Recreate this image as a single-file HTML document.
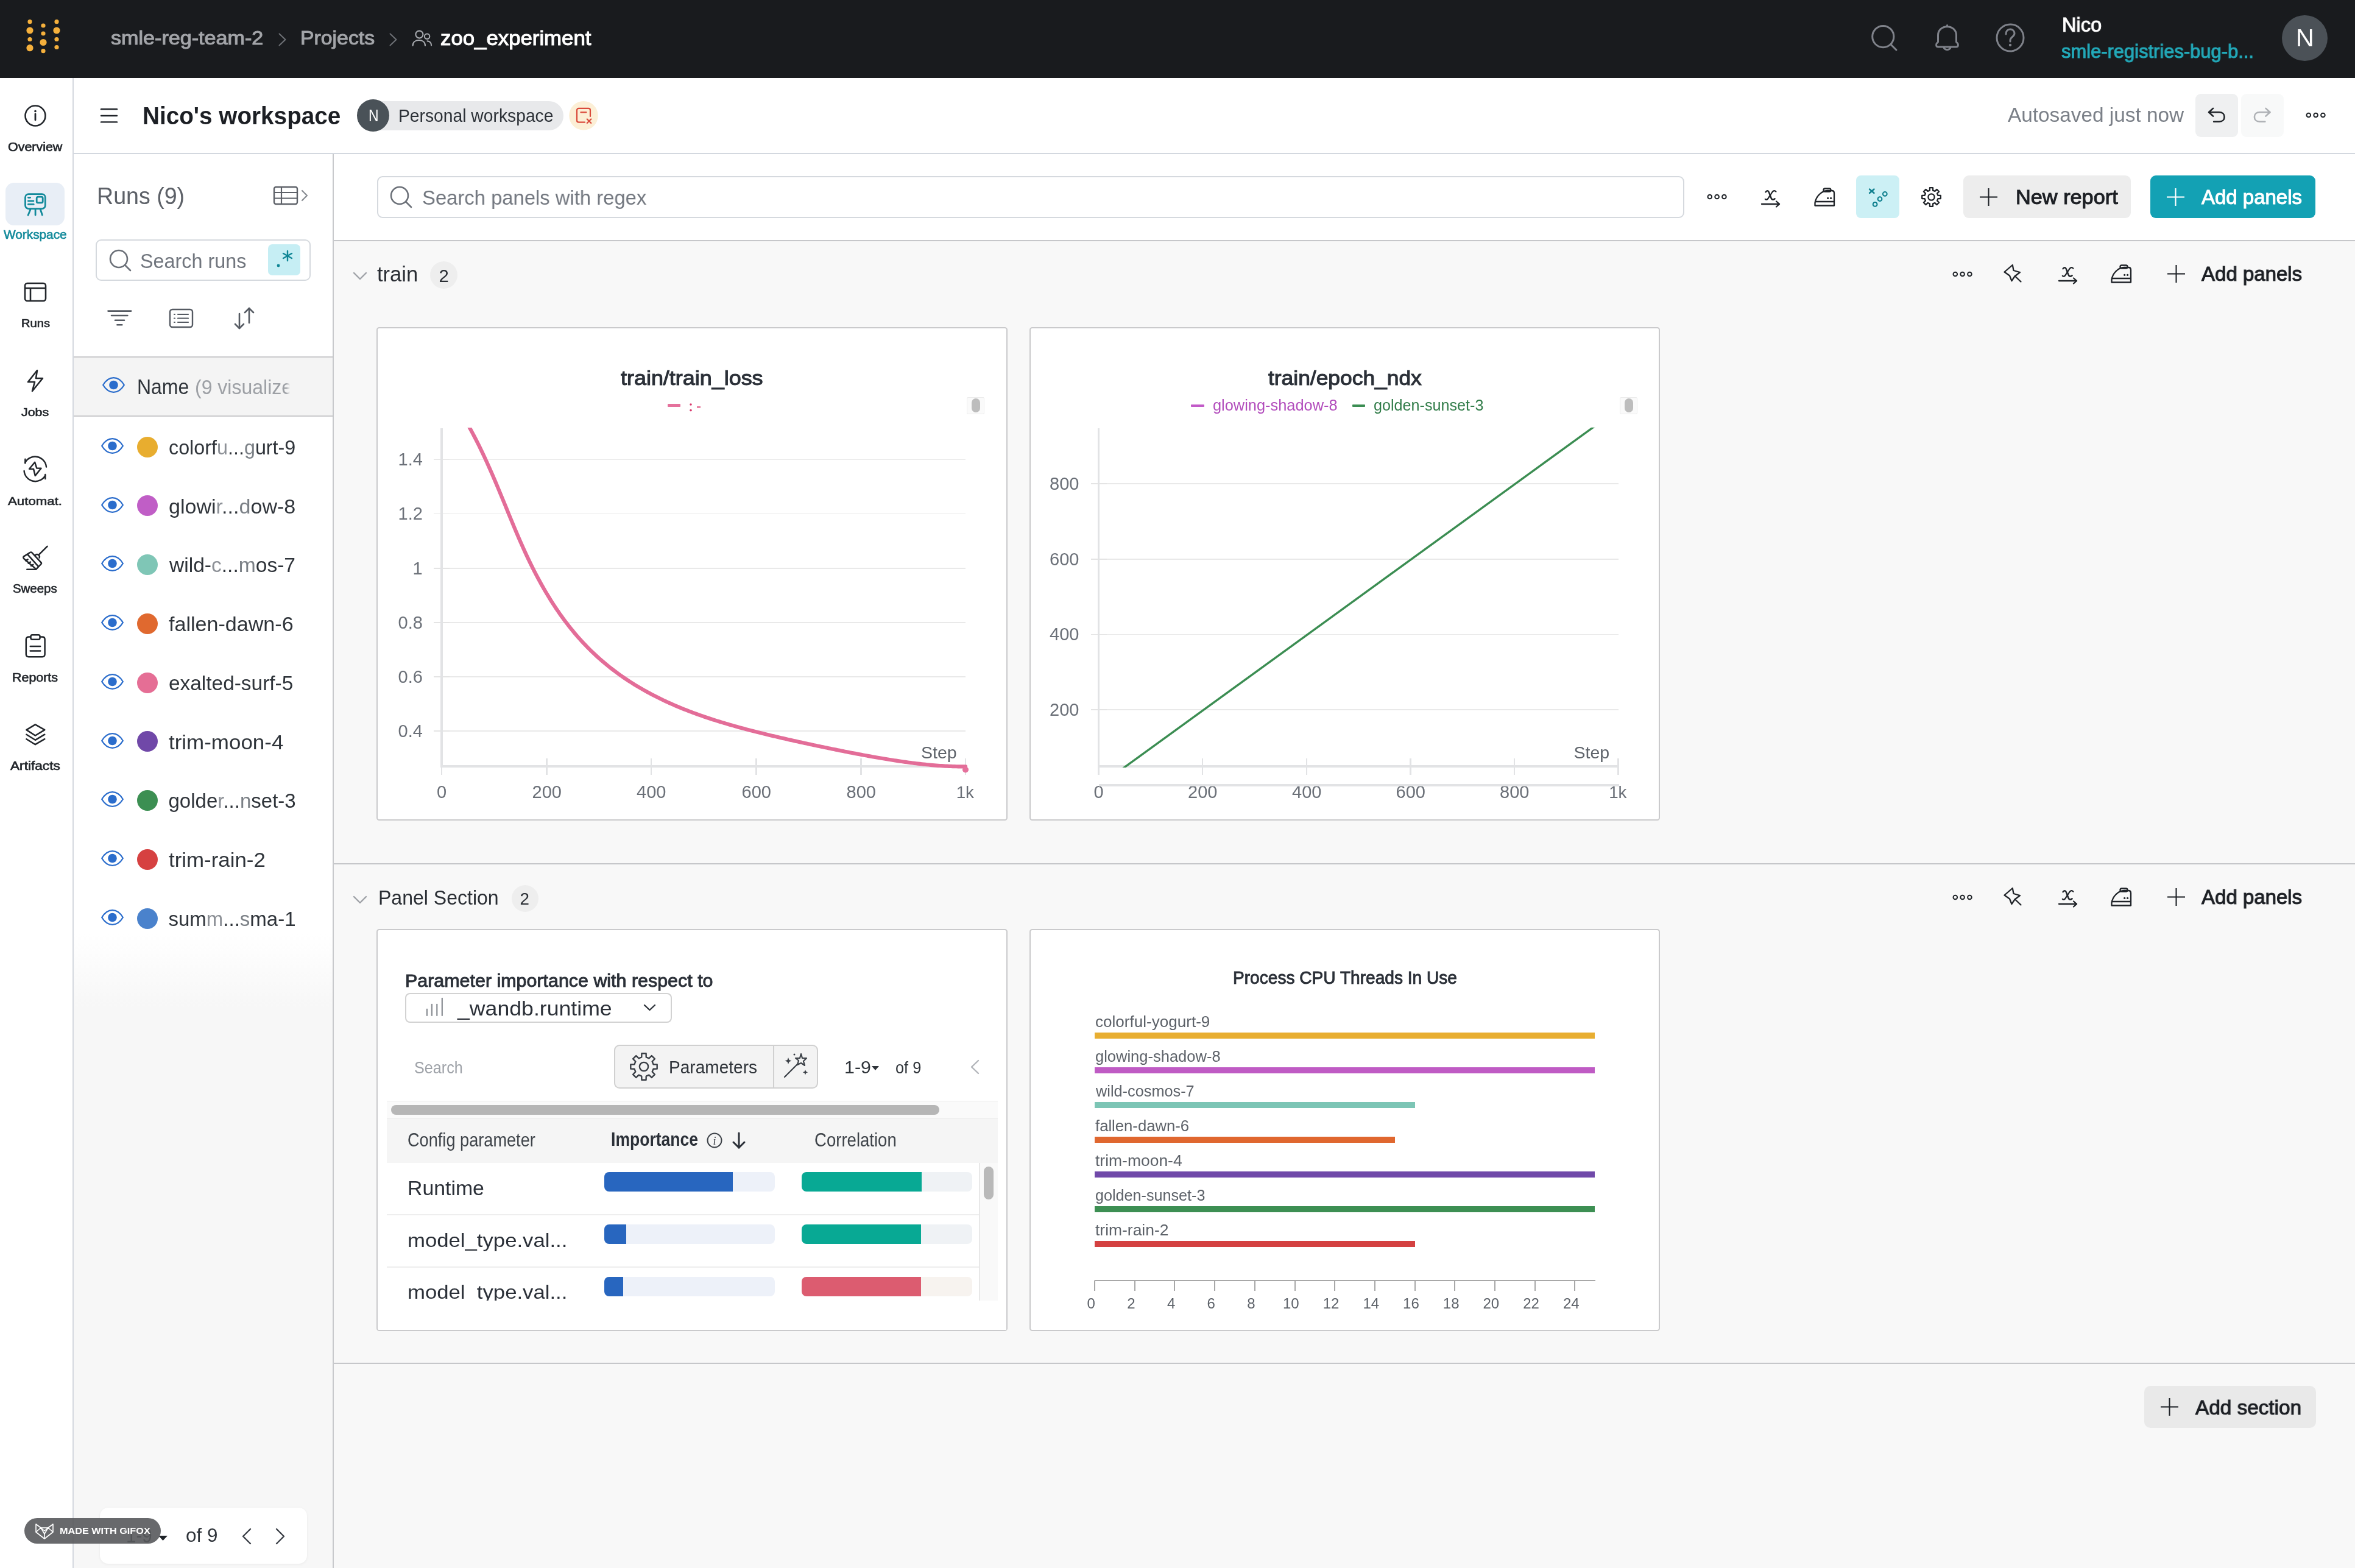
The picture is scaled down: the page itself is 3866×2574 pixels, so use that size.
<!DOCTYPE html><html><head><meta charset="utf-8"><style>
html,body{margin:0;padding:0;width:3866px;height:2574px;overflow:hidden;background:#f8f8f8;font-family:"Liberation Sans",sans-serif;}
#root{position:relative;width:3866px;height:2574px;overflow:hidden;will-change:transform;-webkit-font-smoothing:antialiased;}
</style></head><body><div id="root"><div style="position:absolute;left:0px;top:0px;width:3866px;height:128px;background:#191b1e;border-radius:0px;"></div>
<div style="position:absolute;left:0px;top:128px;width:120px;height:2446px;background:#ffffff;border-radius:0px;"></div>
<div style="position:absolute;left:119px;top:128px;width:2px;height:2446px;background:#d4d8df;border-radius:0px;"></div>
<div style="position:absolute;left:121px;top:128px;width:3745px;height:124px;background:#ffffff;border-radius:0px;"></div>
<div style="position:absolute;left:121px;top:251px;width:3745px;height:2px;background:#d3d8df;border-radius:0px;"></div>
<div style="position:absolute;left:121px;top:253px;width:425px;height:2321px;background:linear-gradient(#ffffff 0px,#ffffff 1280px,#f7f7f7 1400px,#f7f7f7 2321px);border-radius:0px;"></div>
<div style="position:absolute;left:546px;top:253px;width:2px;height:2321px;background:#c8c9cc;border-radius:0px;"></div>
<div style="position:absolute;left:548px;top:253px;width:3318px;height:141px;background:#ffffff;border-radius:0px;"></div>
<div style="position:absolute;left:548px;top:394px;width:3318px;height:2px;background:#c6c7ca;border-radius:0px;"></div>
<div style="position:absolute;left:548px;top:1417px;width:3318px;height:2px;background:#c6c7ca;border-radius:0px;"></div>
<div style="position:absolute;left:548px;top:2237.3px;width:3318px;height:2.0px;background:#c6c7ca;border-radius:0px;"></div>
<svg style="position:absolute;left:0px;top:0px;overflow:visible;" width="140" height="128" viewBox="0 0 140 128"><circle cx="49" cy="35.7" r="3.6" fill="#f5b03c"/><circle cx="49" cy="50" r="5.6" fill="#f5b03c"/><circle cx="49" cy="64.5" r="3.6" fill="#f5b03c"/><circle cx="49" cy="78.7" r="5.6" fill="#f5b03c"/><circle cx="71" cy="42" r="3.6" fill="#f5b03c"/><circle cx="71" cy="55" r="3.6" fill="#f5b03c"/><circle cx="71" cy="69.5" r="5.6" fill="#f5b03c"/><circle cx="71" cy="83.7" r="3.6" fill="#f5b03c"/><circle cx="93" cy="35.7" r="3.6" fill="#f5b03c"/><circle cx="93" cy="50" r="5.6" fill="#f5b03c"/><circle cx="93" cy="64.5" r="3.6" fill="#f5b03c"/><circle cx="93" cy="77.5" r="3.6" fill="#f5b03c"/></svg>
<div style="position:absolute;left:182.00px;top:47.01px;font-size:31.75px;line-height:1;font-weight:normal;color:#a3a5a9;white-space:pre;transform:scaleX(1.0744);transform-origin:0 0;-webkit-text-stroke:1.02px #a3a5a9;">smle-reg-team-2</div>
<svg style="position:absolute;left:455px;top:52px;overflow:visible;" width="20" height="28" viewBox="0 0 20 28"><polyline points="3.5,3.5 13.5,13 3.5,22.5" fill="none" stroke="#6d7075" stroke-width="2" stroke-linecap="round" stroke-linejoin="round"/></svg>
<div style="position:absolute;left:492.50px;top:47.01px;font-size:31.75px;line-height:1;font-weight:normal;color:#a3a5a9;white-space:pre;transform:scaleX(1.0643);transform-origin:0 0;-webkit-text-stroke:1.02px #a3a5a9;">Projects</div>
<svg style="position:absolute;left:637px;top:52px;overflow:visible;" width="20" height="28" viewBox="0 0 20 28"><polyline points="3.5,3.5 13.5,13 3.5,22.5" fill="none" stroke="#6d7075" stroke-width="2" stroke-linecap="round" stroke-linejoin="round"/></svg>
<svg style="position:absolute;left:675px;top:48px;overflow:visible;" width="37" height="34" viewBox="0 0 37 34"><g fill="none" stroke="#a6a9ae" stroke-width="2.1" stroke-linecap="round"><circle cx="13.4" cy="8.6" r="6"/><path d="M2.6 27 C2.6 21 7 18 12.8 18 C18.6 18 23 21 23 27"/><circle cx="26.1" cy="11.7" r="4.2"/><path d="M26.5 19.4 C30.5 19.6 33.1 22.5 33.1 26.4"/></g></svg>
<div style="position:absolute;left:722.50px;top:45.53px;font-size:33.5px;line-height:1;font-weight:normal;color:#ffffff;white-space:pre;transform:scaleX(1.0380);transform-origin:0 0;-webkit-text-stroke:1.07px #ffffff;">zoo_experiment</div>
<svg style="position:absolute;left:3070px;top:40px;overflow:visible;" width="48" height="46" viewBox="0 0 48 46"><circle cx="21.3" cy="20.1" r="17.6" fill="none" stroke="#7f828a" stroke-width="3"/><line x1="34" y1="33" x2="43" y2="42" stroke="#7f828a" stroke-width="3" stroke-linecap="round"/></svg>
<svg style="position:absolute;left:3173px;top:38px;overflow:visible;" width="46" height="50" viewBox="0 0 46 50"><g fill="none" stroke="#7f828a" stroke-width="3" stroke-linejoin="round" stroke-linecap="round"><path d="M23.5 3.5 L23.5 5.5"/><path d="M8.5 31 L8.5 20 C8.5 11.5 15 5.8 23.5 5.8 C32 5.8 38.5 11.5 38.5 20 L38.5 31 L40.5 33 C42.5 35 41.5 39 38.5 39 L8.5 39 C5.5 39 4.5 35 6.5 33 Z"/><path d="M18 39.5 C18.5 45 28.5 45 29 39.5"/></g></svg>
<svg style="position:absolute;left:3275px;top:37px;overflow:visible;" width="50" height="50" viewBox="0 0 50 50"><circle cx="25" cy="25" r="22" fill="none" stroke="#7f828a" stroke-width="3"/><path d="M18 19 C18 14 21 11 25 11 C29 11 32 14 32 18 C32 23 25 24 25 29 L25 31" fill="none" stroke="#7f828a" stroke-width="3" stroke-linecap="round"/><circle cx="25" cy="37" r="2.2" fill="#7f828a"/></svg>
<div style="position:absolute;left:3385.00px;top:23.95px;font-size:33.0px;line-height:1;font-weight:normal;color:#ffffff;white-space:pre;transform:scaleX(0.9848);transform-origin:0 0;-webkit-text-stroke:1.06px #ffffff;">Nico</div>
<div style="position:absolute;left:3384.00px;top:68.65px;font-size:31.0px;line-height:1;font-weight:normal;color:#23a9b9;white-space:pre;transform:scaleX(0.9968);transform-origin:0 0;-webkit-text-stroke:0.99px #23a9b9;">smle-registries-bug-b...</div>
<svg style="position:absolute;left:3746px;top:25px;overflow:visible;" width="76" height="75" viewBox="0 0 76 75"><circle cx="37.5" cy="37.5" r="37.5" fill="#4b5157"/></svg>
<div style="position:absolute;left:3768.91px;top:42.44px;font-size:41.25px;line-height:1;font-weight:normal;color:#ffffff;white-space:pre;">N</div>
<svg style="position:absolute;left:40px;top:172px;overflow:visible;" width="36" height="36" viewBox="0 0 36 36"><circle cx="18" cy="18" r="16.5" fill="none" stroke="#22262b" stroke-width="2.6"/><circle cx="18" cy="10.5" r="1.8" fill="#22262b"/><line x1="18" y1="15" x2="18" y2="25" stroke="#22262b" stroke-width="2.8" stroke-linecap="round"/></svg>
<div style="position:absolute;left:12.50px;top:231.71px;font-size:19.75px;line-height:1;font-weight:normal;color:#22262b;white-space:pre;transform:scaleX(1.0850);transform-origin:0 0;-webkit-text-stroke:0.63px #22262b;">Overview</div>
<div style="position:absolute;left:9.25px;top:300px;width:96.5px;height:69.5px;background:#e8eef6;border-radius:14px;"></div>
<svg style="position:absolute;left:38px;top:315px;overflow:visible;" width="40" height="41" viewBox="0 0 40 41"><g fill="none" stroke="#138a9b" stroke-width="2.8" stroke-linecap="round" stroke-linejoin="round"><rect x="3.5" y="3.6" width="32.8" height="24" rx="5.5"/><line x1="8.4" y1="9.3" x2="11.6" y2="9.3"/><line x1="8.4" y1="14.9" x2="16.9" y2="14.9"/><line x1="8.4" y1="20.4" x2="17.2" y2="20.4"/><rect x="22.2" y="8.2" width="10" height="9.7" rx="2.2"/><line x1="11.9" y1="29" x2="8.1" y2="38.2"/><line x1="20.1" y1="29" x2="20.1" y2="38"/><line x1="28.4" y1="29" x2="31.4" y2="38"/></g></svg>
<div style="position:absolute;left:5.50px;top:375.71px;font-size:19.75px;line-height:1;font-weight:normal;color:#138a9b;white-space:pre;transform:scaleX(1.0532);transform-origin:0 0;-webkit-text-stroke:0.63px #138a9b;">Workspace</div>
<svg style="position:absolute;left:38px;top:462px;overflow:visible;" width="40" height="35" viewBox="0 0 40 35"><rect x="3" y="3" width="34" height="29" rx="4" fill="none" stroke="#22262b" stroke-width="2.6"/><line x1="3" y1="11" x2="37" y2="11" stroke="#22262b" stroke-width="2.6"/><line x1="12" y1="11" x2="12" y2="32" stroke="#22262b" stroke-width="2.6"/></svg>
<div style="position:absolute;left:34.50px;top:522.27px;font-size:18.5px;line-height:1;font-weight:normal;color:#22262b;white-space:pre;transform:scaleX(1.0888);transform-origin:0 0;-webkit-text-stroke:0.59px #22262b;">Runs</div>
<svg style="position:absolute;left:40px;top:605px;overflow:visible;" width="36" height="40" viewBox="0 0 36 40"><path d="M21 3 L6 22 L17 22 L13 37 L30 16 L19 16 Z" fill="none" stroke="#22262b" stroke-width="2.6" stroke-linejoin="round"/></svg>
<div style="position:absolute;left:35.00px;top:667.14px;font-size:19.25px;line-height:1;font-weight:normal;color:#22262b;white-space:pre;transform:scaleX(1.1104);transform-origin:0 0;-webkit-text-stroke:0.62px #22262b;">Jobs</div>
<svg style="position:absolute;left:38px;top:750px;overflow:visible;" width="40" height="41" viewBox="0 0 40 41"><g fill="none" stroke="#22262b" stroke-width="2.5" stroke-linecap="round" stroke-linejoin="round"><path d="M3.2 9.5 A18.5 18.5 0 0 1 38 16.5"/><path d="M1.6 23 A18.5 18.5 0 0 0 36.3 30.5"/><line x1="3.4" y1="3.8" x2="3.4" y2="10.2"/><line x1="36.3" y1="29" x2="36.3" y2="36"/><path d="M19.2 8.8 L10.1 19.7 L17.1 20.1 L19.8 30.9 L29.5 18.8 L22.2 18.4 Z"/></g></svg>
<div style="position:absolute;left:12.50px;top:812.64px;font-size:19.25px;line-height:1;font-weight:normal;color:#22262b;white-space:pre;transform:scaleX(1.1558);transform-origin:0 0;-webkit-text-stroke:0.62px #22262b;">Automat.</div>
<svg style="position:absolute;left:36px;top:895px;overflow:visible;" width="44" height="46" viewBox="0 0 44 46"><g fill="none" stroke="#22262b" stroke-width="2.5" stroke-linecap="round" stroke-linejoin="round"><line x1="41.6" y1="1.8" x2="28" y2="15.4"/><path d="M21.8 16.6 A4 4 0 0 1 28.6 20.6"/><path d="M2.8 18.6 L13.6 11.8 C14.6 11.2 15.6 11.4 16.3 12.2 L31.4 28.3 C32.1 29.1 32.1 30.2 31.4 31 L23.4 39.4 L3.4 22.2 C2.2 21.2 2.0 19.4 2.8 18.6 Z"/><line x1="8.3" y1="39.8" x2="23" y2="39.8"/><line x1="9.2" y1="15.2" x2="26.5" y2="34.3"/><line x1="6.2" y1="25.4" x2="9.6" y2="23.4"/><line x1="10.6" y1="29.6" x2="14" y2="27.6"/><line x1="15" y1="33.8" x2="18.4" y2="31.8"/></g></svg>
<div style="position:absolute;left:21.00px;top:957.21px;font-size:19.75px;line-height:1;font-weight:normal;color:#22262b;white-space:pre;transform:scaleX(1.0341);transform-origin:0 0;-webkit-text-stroke:0.63px #22262b;">Sweeps</div>
<svg style="position:absolute;left:40px;top:1040px;overflow:visible;" width="36" height="41" viewBox="0 0 36 41"><g fill="none" stroke="#22262b" stroke-width="2.5" stroke-linecap="round" stroke-linejoin="round"><path d="M10 5.5 L7 5.5 C4.5 5.5 2.8 7.2 2.8 9.5 L2.8 34 C2.8 36.5 4.5 38.2 7 38.2 L29.5 38.2 C32 38.2 33.6 36.5 33.6 34 L33.6 9.5 C33.6 7.2 32 5.5 29.5 5.5 L26 5.5"/><rect x="10.5" y="2.3" width="15" height="7.5" rx="2.5"/><line x1="9.7" y1="21.1" x2="26.2" y2="21.1"/><line x1="9.7" y1="28.6" x2="26.2" y2="28.6"/></g></svg>
<div style="position:absolute;left:20.00px;top:1102.00px;font-size:20.0px;line-height:1;font-weight:normal;color:#22262b;white-space:pre;transform:scaleX(1.0714);transform-origin:0 0;-webkit-text-stroke:0.64px #22262b;">Reports</div>
<svg style="position:absolute;left:40px;top:1186px;overflow:visible;" width="36" height="40" viewBox="0 0 36 40"><g fill="none" stroke="#22262b" stroke-width="2.5" stroke-linecap="round" stroke-linejoin="round"><path d="M3.4 12.1 L17.9 3.4 L33.3 12.1 L17.9 21.5 Z"/><path d="M3.4 19.7 L17.9 28.8 L33.3 19.7"/><path d="M3.4 27.2 L17.9 36.2 L33.3 27.2"/></g></svg>
<div style="position:absolute;left:16.50px;top:1247.00px;font-size:20.0px;line-height:1;font-weight:normal;color:#22262b;white-space:pre;transform:scaleX(1.1319);transform-origin:0 0;-webkit-text-stroke:0.64px #22262b;">Artifacts</div>
<svg style="position:absolute;left:164px;top:176px;overflow:visible;" width="30" height="28" viewBox="0 0 30 28"><line x1="2" y1="3.2" x2="28" y2="3.2" stroke="#1f2328" stroke-width="2.4" stroke-linecap="round"/><line x1="2" y1="14" x2="28" y2="14" stroke="#1f2328" stroke-width="2.4" stroke-linecap="round"/><line x1="2" y1="24.4" x2="28" y2="24.4" stroke="#1f2328" stroke-width="2.4" stroke-linecap="round"/></svg>
<div style="position:absolute;left:233.60px;top:171.19px;font-size:40.25px;line-height:1;font-weight:bold;color:#1c1f24;white-space:pre;transform:scaleX(0.9613);transform-origin:0 0;">Nico's workspace</div>
<div style="position:absolute;left:600px;top:165.5px;width:324.5px;height:48.5px;background:#e8e9eb;border-radius:25px;"></div>
<svg style="position:absolute;left:586.4px;top:162.8px;overflow:visible;" width="53.0" height="53.0" viewBox="0 0 53.0 53.0"><circle cx="26.5" cy="26.5" r="26.5" fill="#4a5258"/></svg>
<div style="position:absolute;left:604.70px;top:175.47px;font-size:28.5px;line-height:1;font-weight:normal;color:#ffffff;white-space:pre;transform:scaleX(0.8056);transform-origin:0 0;">N</div>
<div style="position:absolute;left:654.40px;top:175.30px;font-size:30.0px;line-height:1;font-weight:normal;color:#2c3137;white-space:pre;transform:scaleX(0.9419);transform-origin:0 0;">Personal workspace</div>
<svg style="position:absolute;left:934px;top:165.5px;overflow:visible;" width="48" height="48.0" viewBox="0 0 48 48.0"><circle cx="24" cy="23.8" r="23.8" fill="#fcefd6"/><g fill="none" stroke="#da4a3b" stroke-width="2.2" stroke-linecap="round" stroke-linejoin="round"><path d="M35 25 L35 15 C35 13 33.5 11.9 32 11.9 L16 11.9 C14.3 11.9 13 13.2 13 15 L13 31.5 C13 33.3 14.3 34.7 16 34.7 L26 34.7"/><line x1="19.4" y1="18.3" x2="28.5" y2="18.3"/><line x1="29.8" y1="29.5" x2="36.3" y2="36"/><line x1="36.3" y1="29.5" x2="29.8" y2="36"/></g></svg>
<div style="position:absolute;left:3296.00px;top:171.95px;font-size:33.0px;line-height:1;font-weight:normal;color:#7b8088;white-space:pre;transform:scaleX(1.0105);transform-origin:0 0;">Autosaved just now</div>
<div style="position:absolute;left:3604.3px;top:154px;width:69.59999999999991px;height:70.6px;background:#eff0f1;border-radius:9px;"></div>
<div style="position:absolute;left:3679.2px;top:154px;width:70.0px;height:70.6px;background:#f8f9f9;border-radius:9px;"></div>
<svg style="position:absolute;left:3620px;top:172px;overflow:visible;" width="40" height="34" viewBox="0 0 40 34"><g fill="none" stroke="#1f2328" stroke-width="2.6" stroke-linecap="round" stroke-linejoin="round"><path d="M6.1 12.3 L23 12.3 C28.5 12.3 31.6 15.5 31.6 19.9 C31.6 24.2 28.5 27.7 23 27.7 L14.2 27.7"/><polyline points="13,5.9 6.1,12.3 13,18.6"/></g></svg>
<svg style="position:absolute;left:3694px;top:172px;overflow:visible;" width="40" height="34" viewBox="0 0 40 34"><g fill="none" stroke="#aeb1b5" stroke-width="2.6" stroke-linecap="round" stroke-linejoin="round"><path d="M32.4 12.3 L15.5 12.3 C10 12.3 6.9 15.5 6.9 19.9 C6.9 24.2 10 27.7 15.5 27.7 L24.3 27.7"/><polyline points="25.5,5.9 32.4,12.3 25.5,18.6"/></g></svg>
<svg style="position:absolute;left:3784px;top:181px;overflow:visible;" width="36" height="16" viewBox="0 0 36 16"><circle cx="5.8" cy="8" r="3.3" fill="none" stroke="#1f2328" stroke-width="2"/><circle cx="17.6" cy="8" r="3.3" fill="none" stroke="#1f2328" stroke-width="2"/><circle cx="29.4" cy="8" r="3.3" fill="none" stroke="#1f2328" stroke-width="2"/></svg>
<div style="position:absolute;left:159.00px;top:301.64px;font-size:39.25px;line-height:1;font-weight:normal;color:#5d6168;white-space:pre;transform:scaleX(0.9572);transform-origin:0 0;">Runs (9)</div>
<svg style="position:absolute;left:447px;top:304px;overflow:visible;" width="63" height="34" viewBox="0 0 63 34"><rect x="3" y="3" width="38" height="28" rx="3" fill="none" stroke="#5d6168" stroke-width="2.4"/><line x1="3" y1="12" x2="41" y2="12" stroke="#5d6168" stroke-width="2.2"/><line x1="3" y1="21.5" x2="41" y2="21.5" stroke="#5d6168" stroke-width="2.2"/><line x1="15" y1="3" x2="15" y2="31" stroke="#5d6168" stroke-width="2.2"/><polyline points="49,9 57,17 49,25" fill="none" stroke="#8a8e94" stroke-width="2.2" stroke-linecap="round" stroke-linejoin="round"/></svg>
<div style="position:absolute;left:156.5px;top:392.5px;width:353.5px;height:68.5px;background:#ffffff;border-radius:9px;border:2px solid #d5d9de;box-sizing:border-box;"></div>
<svg style="position:absolute;left:178px;top:408px;overflow:visible;" width="40" height="40" viewBox="0 0 40 40"><circle cx="17" cy="17" r="14" fill="none" stroke="#6b7078" stroke-width="2.6"/><line x1="27" y1="27" x2="36" y2="36" stroke="#6b7078" stroke-width="2.6" stroke-linecap="round"/></svg>
<div style="position:absolute;left:230.00px;top:411.10px;font-size:34.0px;line-height:1;font-weight:normal;color:#71767e;white-space:pre;transform:scaleX(0.9508);transform-origin:0 0;">Search runs</div>
<div style="position:absolute;left:440px;top:401px;width:53px;height:51px;background:#c6eef4;border-radius:7px;"></div>
<svg style="position:absolute;left:440px;top:401px;overflow:visible;" width="53" height="51" viewBox="0 0 53 51"><circle cx="17" cy="35" r="2.4" fill="#0e8595"/><g stroke="#0e8595" stroke-width="2.4" stroke-linecap="round"><line x1="32" y1="11" x2="32" y2="27"/><line x1="25" y1="15" x2="39" y2="23"/><line x1="39" y1="15" x2="25" y2="23"/></g></svg>
<svg style="position:absolute;left:175px;top:505px;overflow:visible;" width="42" height="35" viewBox="0 0 42 35"><g stroke="#555a62" stroke-width="2.6" stroke-linecap="round"><line x1="2.5" y1="5.6" x2="40.2" y2="5.6"/><line x1="8" y1="13" x2="34.4" y2="13"/><line x1="14" y1="20.7" x2="29" y2="20.7"/><line x1="17.4" y1="28.3" x2="25.3" y2="28.3"/></g></svg>
<svg style="position:absolute;left:276px;top:505px;overflow:visible;" width="44" height="35" viewBox="0 0 44 35"><rect x="3" y="3" width="37" height="29" rx="4" fill="none" stroke="#555a62" stroke-width="2.4"/><g stroke="#555a62" stroke-width="2.2" stroke-linecap="round"><line x1="10" y1="11" x2="11" y2="11"/><line x1="16" y1="11" x2="33" y2="11"/><line x1="10" y1="17.5" x2="11" y2="17.5"/><line x1="16" y1="17.5" x2="33" y2="17.5"/><line x1="10" y1="24" x2="11" y2="24"/><line x1="16" y1="24" x2="33" y2="24"/></g></svg>
<svg style="position:absolute;left:383px;top:503px;overflow:visible;" width="36" height="38" viewBox="0 0 36 38"><g fill="none" stroke="#555a62" stroke-width="2.6" stroke-linecap="round" stroke-linejoin="round"><line x1="10" y1="12" x2="10" y2="36"/><polyline points="3,29 10,36 17,29"/><line x1="26" y1="3" x2="26" y2="27"/><polyline points="19,10 26,3 33,10"/></g></svg>
<div style="position:absolute;left:121px;top:585px;width:425px;height:98px;background:#f4f4f4;border-radius:0px;"></div>
<div style="position:absolute;left:121px;top:585px;width:425px;height:2px;background:#cbcbcd;border-radius:0px;"></div>
<div style="position:absolute;left:121px;top:682px;width:425px;height:2px;background:#cbcbcd;border-radius:0px;"></div>
<svg style="position:absolute;left:168px;top:619.3px;overflow:visible;" width="37" height="26.0" viewBox="0 0 37 26.0"><path d="M1.2 13 C6 5 12 1.2 18.5 1.2 C25 1.2 31 5 35.8 13 C31 21 25 24.8 18.5 24.8 C12 24.8 6 21 1.2 13 Z" fill="none" stroke="#2b6dcc" stroke-width="2.3" stroke-linejoin="round"/><circle cx="18.5" cy="13" r="7.3" fill="#2b6dcc"/></svg>
<div style="position:absolute;left:224.50px;top:618.17px;font-size:34.5px;line-height:1;font-weight:normal;color:#2f343a;white-space:pre;transform:scaleX(0.9259);transform-origin:0 0;">Name</div>
<div style="position:absolute;left:320.00px;top:619.45px;font-size:33.0px;line-height:1;font-weight:normal;color:#9da0a5;white-space:pre;transform:scaleX(0.9697);transform-origin:0 0;">(9 visualize</div>
<div style="position:absolute;left:440px;top:600px;width:106px;height:70px;background:linear-gradient(90deg,rgba(244,244,244,0),rgba(244,244,244,0) 30px,#f4f4f4 36px);border-radius:0px;"></div>
<svg style="position:absolute;left:165.5px;top:718.9px;overflow:visible;" width="37.0" height="26.0" viewBox="0 0 37.0 26.0"><path d="M1.2 13 C6 5 12 1.2 18.5 1.2 C25 1.2 31 5 35.8 13 C31 21 25 24.8 18.5 24.8 C12 24.8 6 21 1.2 13 Z" fill="none" stroke="#2b6dcc" stroke-width="2.3" stroke-linejoin="round"/><circle cx="18.5" cy="13" r="7.3" fill="#2b6dcc"/></svg>
<svg style="position:absolute;left:225px;top:716.5px;overflow:visible;" width="34" height="34.0" viewBox="0 0 34 34.0"><circle cx="17" cy="17" r="17" fill="#e8ad2f"/></svg>
<div style="position:absolute;left:276.50px;top:717.95px;font-size:33.0px;line-height:1;font-weight:normal;color:#2f343a;white-space:pre;transform:scaleX(0.9789);transform-origin:0 0;">colorf<span style="color:#8d9197">u</span>...<span style="color:#7b8086">g</span>urt-9</div>
<svg style="position:absolute;left:165.5px;top:815.65px;overflow:visible;" width="37.0" height="26.0" viewBox="0 0 37.0 26.0"><path d="M1.2 13 C6 5 12 1.2 18.5 1.2 C25 1.2 31 5 35.8 13 C31 21 25 24.8 18.5 24.8 C12 24.8 6 21 1.2 13 Z" fill="none" stroke="#2b6dcc" stroke-width="2.3" stroke-linejoin="round"/><circle cx="18.5" cy="13" r="7.3" fill="#2b6dcc"/></svg>
<svg style="position:absolute;left:225px;top:813.25px;overflow:visible;" width="34" height="34.0" viewBox="0 0 34 34.0"><circle cx="17" cy="17" r="17" fill="#c05ec6"/></svg>
<div style="position:absolute;left:276.50px;top:814.70px;font-size:33.0px;line-height:1;font-weight:normal;color:#2f343a;white-space:pre;transform:scaleX(1.0322);transform-origin:0 0;">glowi<span style="color:#8d9197">r</span>...<span style="color:#7b8086">d</span>ow-8</div>
<svg style="position:absolute;left:165.5px;top:912.4px;overflow:visible;" width="37.0" height="26.0" viewBox="0 0 37.0 26.0"><path d="M1.2 13 C6 5 12 1.2 18.5 1.2 C25 1.2 31 5 35.8 13 C31 21 25 24.8 18.5 24.8 C12 24.8 6 21 1.2 13 Z" fill="none" stroke="#2b6dcc" stroke-width="2.3" stroke-linejoin="round"/><circle cx="18.5" cy="13" r="7.3" fill="#2b6dcc"/></svg>
<svg style="position:absolute;left:225px;top:910.0px;overflow:visible;" width="34" height="34.0" viewBox="0 0 34 34.0"><circle cx="17" cy="17" r="17" fill="#7fc6b6"/></svg>
<div style="position:absolute;left:277.52px;top:911.45px;font-size:33.0px;line-height:1;font-weight:normal;color:#2f343a;white-space:pre;transform:scaleX(1.0171);transform-origin:0 0;">wild-<span style="color:#8d9197">c</span>...<span style="color:#7b8086">m</span>os-7</div>
<svg style="position:absolute;left:165.5px;top:1009.15px;overflow:visible;" width="37.0" height="26.000000000000114" viewBox="0 0 37.0 26.000000000000114"><path d="M1.2 13 C6 5 12 1.2 18.5 1.2 C25 1.2 31 5 35.8 13 C31 21 25 24.8 18.5 24.8 C12 24.8 6 21 1.2 13 Z" fill="none" stroke="#2b6dcc" stroke-width="2.3" stroke-linejoin="round"/><circle cx="18.5" cy="13" r="7.3" fill="#2b6dcc"/></svg>
<svg style="position:absolute;left:225px;top:1006.75px;overflow:visible;" width="34" height="34.0" viewBox="0 0 34 34.0"><circle cx="17" cy="17" r="17" fill="#e0692f"/></svg>
<div style="position:absolute;left:276.50px;top:1008.20px;font-size:33.0px;line-height:1;font-weight:normal;color:#2f343a;white-space:pre;transform:scaleX(1.0328);transform-origin:0 0;">fallen-dawn-6</div>
<svg style="position:absolute;left:165.5px;top:1105.9px;overflow:visible;" width="37.0" height="26.0" viewBox="0 0 37.0 26.0"><path d="M1.2 13 C6 5 12 1.2 18.5 1.2 C25 1.2 31 5 35.8 13 C31 21 25 24.8 18.5 24.8 C12 24.8 6 21 1.2 13 Z" fill="none" stroke="#2b6dcc" stroke-width="2.3" stroke-linejoin="round"/><circle cx="18.5" cy="13" r="7.3" fill="#2b6dcc"/></svg>
<svg style="position:absolute;left:225px;top:1103.5px;overflow:visible;" width="34" height="34.0" viewBox="0 0 34 34.0"><circle cx="17" cy="17" r="17" fill="#e56e95"/></svg>
<div style="position:absolute;left:276.50px;top:1104.95px;font-size:33.0px;line-height:1;font-weight:normal;color:#2f343a;white-space:pre;transform:scaleX(1.0124);transform-origin:0 0;">exalted-surf-5</div>
<svg style="position:absolute;left:165.5px;top:1202.65px;overflow:visible;" width="37.0" height="26.0" viewBox="0 0 37.0 26.0"><path d="M1.2 13 C6 5 12 1.2 18.5 1.2 C25 1.2 31 5 35.8 13 C31 21 25 24.8 18.5 24.8 C12 24.8 6 21 1.2 13 Z" fill="none" stroke="#2b6dcc" stroke-width="2.3" stroke-linejoin="round"/><circle cx="18.5" cy="13" r="7.3" fill="#2b6dcc"/></svg>
<svg style="position:absolute;left:225px;top:1200.25px;overflow:visible;" width="34" height="34.0" viewBox="0 0 34 34.0"><circle cx="17" cy="17" r="17" fill="#7048a8"/></svg>
<div style="position:absolute;left:276.50px;top:1201.70px;font-size:33.0px;line-height:1;font-weight:normal;color:#2f343a;white-space:pre;transform:scaleX(1.0590);transform-origin:0 0;">trim-moon-4</div>
<svg style="position:absolute;left:165.5px;top:1299.4px;overflow:visible;" width="37.0" height="26.0" viewBox="0 0 37.0 26.0"><path d="M1.2 13 C6 5 12 1.2 18.5 1.2 C25 1.2 31 5 35.8 13 C31 21 25 24.8 18.5 24.8 C12 24.8 6 21 1.2 13 Z" fill="none" stroke="#2b6dcc" stroke-width="2.3" stroke-linejoin="round"/><circle cx="18.5" cy="13" r="7.3" fill="#2b6dcc"/></svg>
<svg style="position:absolute;left:225px;top:1297.0px;overflow:visible;" width="34" height="34.0" viewBox="0 0 34 34.0"><circle cx="17" cy="17" r="17" fill="#3c8f52"/></svg>
<div style="position:absolute;left:276.50px;top:1298.45px;font-size:33.0px;line-height:1;font-weight:normal;color:#2f343a;white-space:pre;">golde<span style="color:#8d9197">r</span>...<span style="color:#7b8086">n</span>set-3</div>
<svg style="position:absolute;left:165.5px;top:1396.15px;overflow:visible;" width="37.0" height="26.0" viewBox="0 0 37.0 26.0"><path d="M1.2 13 C6 5 12 1.2 18.5 1.2 C25 1.2 31 5 35.8 13 C31 21 25 24.8 18.5 24.8 C12 24.8 6 21 1.2 13 Z" fill="none" stroke="#2b6dcc" stroke-width="2.3" stroke-linejoin="round"/><circle cx="18.5" cy="13" r="7.3" fill="#2b6dcc"/></svg>
<svg style="position:absolute;left:225px;top:1393.75px;overflow:visible;" width="34" height="34.0" viewBox="0 0 34 34.0"><circle cx="17" cy="17" r="17" fill="#d64141"/></svg>
<div style="position:absolute;left:276.50px;top:1395.20px;font-size:33.0px;line-height:1;font-weight:normal;color:#2f343a;white-space:pre;transform:scaleX(1.0567);transform-origin:0 0;">trim-rain-2</div>
<svg style="position:absolute;left:165.5px;top:1492.9px;overflow:visible;" width="37.0" height="26.0" viewBox="0 0 37.0 26.0"><path d="M1.2 13 C6 5 12 1.2 18.5 1.2 C25 1.2 31 5 35.8 13 C31 21 25 24.8 18.5 24.8 C12 24.8 6 21 1.2 13 Z" fill="none" stroke="#2b6dcc" stroke-width="2.3" stroke-linejoin="round"/><circle cx="18.5" cy="13" r="7.3" fill="#2b6dcc"/></svg>
<svg style="position:absolute;left:225px;top:1490.5px;overflow:visible;" width="34" height="34.0" viewBox="0 0 34 34.0"><circle cx="17" cy="17" r="17" fill="#4a82cc"/></svg>
<div style="position:absolute;left:276.50px;top:1491.95px;font-size:33.0px;line-height:1;font-weight:normal;color:#2f343a;white-space:pre;">sum<span style="color:#8d9197">m</span>...<span style="color:#7b8086">s</span>ma-1</div>
<div style="position:absolute;left:618.5px;top:288.5px;width:2146.5px;height:69.5px;background:#ffffff;border-radius:9px;border:2px solid #d5d9de;box-sizing:border-box;"></div>
<svg style="position:absolute;left:639px;top:304px;overflow:visible;" width="40" height="40" viewBox="0 0 40 40"><circle cx="17" cy="17" r="14" fill="none" stroke="#6b7078" stroke-width="2.6"/><line x1="27" y1="27" x2="36" y2="36" stroke="#6b7078" stroke-width="2.6" stroke-linecap="round"/></svg>
<div style="position:absolute;left:692.50px;top:307.10px;font-size:34.0px;line-height:1;font-weight:normal;color:#71767e;white-space:pre;transform:scaleX(0.9647);transform-origin:0 0;">Search panels with regex</div>
<svg style="position:absolute;left:2801px;top:315px;overflow:visible;" width="36" height="16" viewBox="0 0 36 16"><circle cx="5.8" cy="8" r="3.3" fill="none" stroke="#1f2328" stroke-width="2"/><circle cx="17.6" cy="8" r="3.3" fill="none" stroke="#1f2328" stroke-width="2"/><circle cx="29.4" cy="8" r="3.3" fill="none" stroke="#1f2328" stroke-width="2"/></svg>
<svg style="position:absolute;left:2891px;top:311px;overflow:visible;" width="32" height="30" viewBox="0 0 32 30"><g fill="none" stroke="#1f2328" stroke-linecap="round" stroke-linejoin="round"><path d="M7.6 4.2 C9.2 1.6 11.6 1.4 12.8 4.4 L16.6 14.2 C17.6 16.8 19.8 17.6 22.6 15.2" stroke-width="2.5"/><path d="M24.4 3.6 C22.4 1.2 20.2 1.8 18.6 4 L11.6 14.6 C10.2 16.8 8.2 17.4 6.8 15.8" stroke-width="2.2"/><line x1="1" y1="24" x2="30" y2="24" stroke-width="2.3"/><polyline points="25,19.5 30,24 25,28.5" stroke-width="2.3"/></g></svg>
<svg style="position:absolute;left:2978px;top:309px;overflow:visible;" width="35" height="30" viewBox="0 0 35 30"><g fill="none" stroke="#1f2328" stroke-width="2.3" stroke-linejoin="round" stroke-linecap="round"><path d="M1.5 28.5 L33 28.5 L33 8 C33 5 31 4 29 4 L22 4 C12 4 3 14 1.5 24 Z"/><line x1="2" y1="22" x2="33" y2="22"/><rect x="15.5" y="0.5" width="12" height="5" rx="2.5"/></g><circle cx="22.7" cy="16.3" r="1.6" fill="#1f2328"/><circle cx="27.6" cy="16.3" r="1.6" fill="#1f2328"/></svg>
<div style="position:absolute;left:3047px;top:288px;width:71px;height:70px;background:#ccf0f5;border-radius:8px;"></div>
<svg style="position:absolute;left:3047px;top:288px;overflow:visible;" width="71" height="70" viewBox="0 0 71 70"><g stroke="#0f7f8e" stroke-width="2.4" stroke-linecap="round"><line x1="22" y1="22.5" x2="29.5" y2="29"/><line x1="29.5" y1="22.5" x2="22" y2="29"/></g><g fill="none" stroke="#0f7f8e" stroke-width="2"><circle cx="31.1" cy="47.4" r="3.4"/><circle cx="39" cy="38.7" r="3.4"/><circle cx="47.3" cy="30.3" r="3.4"/></g></svg>
<svg style="position:absolute;left:3151.3px;top:304.3px;overflow:visible;" width="39.0" height="39.0" viewBox="0 0 39.0 39.0"><g transform="translate(-3151.3,-304.3)"><path d="M3168.18,312.90 L3168.26,308.51 L3173.34,308.51 L3173.42,312.90 L3176.66,314.24 L3179.81,311.19 L3183.41,314.79 L3180.36,317.94 L3181.70,321.18 L3186.09,321.26 L3186.09,326.34 L3181.70,326.42 L3180.36,329.66 L3183.41,332.81 L3179.81,336.41 L3176.66,333.36 L3173.42,334.70 L3173.34,339.09 L3168.26,339.09 L3168.18,334.70 L3164.94,333.36 L3161.79,336.41 L3158.19,332.81 L3161.24,329.66 L3159.90,326.42 L3155.51,326.34 L3155.51,321.26 L3159.90,321.18 L3161.24,317.94 L3158.19,314.79 L3161.79,311.19 L3164.94,314.24 Z" fill="none" stroke="#1f2328" stroke-width="2.3" stroke-linejoin="round"/><circle cx="3170.8" cy="323.8" r="5.12" fill="none" stroke="#1f2328" stroke-width="2.3"/></g></svg>
<div style="position:absolute;left:3223px;top:288px;width:275px;height:70px;background:#ededed;border-radius:9px;"></div>
<svg style="position:absolute;left:3250px;top:308.8px;overflow:visible;" width="29" height="29.0" viewBox="0 0 29 29.0"><g stroke="#1f2328" stroke-width="2.1" stroke-linecap="butt"><line x1="14.5" y1="0" x2="14.5" y2="29"/><line x1="0" y1="14.5" x2="29" y2="14.5"/></g></svg>
<div style="position:absolute;left:3308.90px;top:306.54px;font-size:33.25px;line-height:1;font-weight:normal;color:#1c1f24;white-space:pre;transform:scaleX(1.0313);transform-origin:0 0;-webkit-text-stroke:1.06px #1c1f24;">New report</div>
<div style="position:absolute;left:3530px;top:288px;width:271px;height:70px;background:#13a1b4;border-radius:9px;"></div>
<svg style="position:absolute;left:3557px;top:308.8px;overflow:visible;" width="29" height="29.0" viewBox="0 0 29 29.0"><g stroke="#ffffff" stroke-width="2.1" stroke-linecap="butt"><line x1="14.5" y1="0" x2="14.5" y2="29"/><line x1="0" y1="14.5" x2="29" y2="14.5"/></g></svg>
<div style="position:absolute;left:3613.80px;top:306.54px;font-size:33.25px;line-height:1;font-weight:normal;color:#ffffff;white-space:pre;transform:scaleX(0.9919);transform-origin:0 0;-webkit-text-stroke:1.06px #ffffff;">Add panels</div>
<svg style="position:absolute;left:579px;top:445px;overflow:visible;" width="24" height="16" viewBox="0 0 24 16"><polyline points="2,3 12,13 22,3" fill="none" stroke="#9da0a5" stroke-width="2.4" stroke-linecap="round" stroke-linejoin="round"/></svg>
<div style="position:absolute;left:619.20px;top:433.22px;font-size:35.5px;line-height:1;font-weight:normal;color:#2a2e34;white-space:pre;transform:scaleX(0.9721);transform-origin:0 0;">train</div>
<svg style="position:absolute;left:706.4px;top:429px;overflow:visible;" width="45.0" height="45" viewBox="0 0 45.0 45"><circle cx="22.5" cy="22.5" r="22.5" fill="#eeeeee"/></svg>
<div style="position:absolute;left:720.43px;top:438.54px;font-size:29.25px;line-height:1;font-weight:normal;color:#2a2e34;white-space:pre;">2</div>
<svg style="position:absolute;left:3204px;top:441.6px;overflow:visible;" width="36" height="16.0" viewBox="0 0 36 16.0"><circle cx="5.8" cy="8" r="3.3" fill="none" stroke="#1f2328" stroke-width="2"/><circle cx="17.6" cy="8" r="3.3" fill="none" stroke="#1f2328" stroke-width="2"/><circle cx="29.4" cy="8" r="3.3" fill="none" stroke="#1f2328" stroke-width="2"/></svg>
<svg style="position:absolute;left:3288.5px;top:434.1px;overflow:visible;" width="30.0" height="30.0" viewBox="0 0 30.0 30.0"><g fill="none" stroke="#1f2328" stroke-width="2.3" stroke-linejoin="round" stroke-linecap="round"><path d="M1.5 12.5 L14.8 1 L16.5 10 L27 13 L18.5 19.5 L13.4 27 L10 18.5 Z"/><line x1="19" y1="19.5" x2="28.5" y2="28.5"/></g></svg>
<svg style="position:absolute;left:3379px;top:437.1px;overflow:visible;" width="32" height="30.0" viewBox="0 0 32 30.0"><g fill="none" stroke="#1f2328" stroke-linecap="round" stroke-linejoin="round"><path d="M7.6 4.2 C9.2 1.6 11.6 1.4 12.8 4.4 L16.6 14.2 C17.6 16.8 19.8 17.6 22.6 15.2" stroke-width="2.5"/><path d="M24.4 3.6 C22.4 1.2 20.2 1.8 18.6 4 L11.6 14.6 C10.2 16.8 8.2 17.4 6.8 15.8" stroke-width="2.2"/><line x1="1" y1="24" x2="30" y2="24" stroke-width="2.3"/><polyline points="25,19.5 30,24 25,28.5" stroke-width="2.3"/></g></svg>
<svg style="position:absolute;left:3465px;top:435.1px;overflow:visible;" width="35" height="30.0" viewBox="0 0 35 30.0"><g fill="none" stroke="#1f2328" stroke-width="2.3" stroke-linejoin="round" stroke-linecap="round"><path d="M1.5 28.5 L33 28.5 L33 8 C33 5 31 4 29 4 L22 4 C12 4 3 14 1.5 24 Z"/><line x1="2" y1="22" x2="33" y2="22"/><rect x="15.5" y="0.5" width="12" height="5" rx="2.5"/></g><circle cx="22.7" cy="16.3" r="1.6" fill="#1f2328"/><circle cx="27.6" cy="16.3" r="1.6" fill="#1f2328"/></svg>
<svg style="position:absolute;left:3557.5px;top:435.1px;overflow:visible;" width="29.0" height="29.0" viewBox="0 0 29.0 29.0"><g stroke="#1f2328" stroke-width="2.1" stroke-linecap="butt"><line x1="14.5" y1="0" x2="14.5" y2="29"/><line x1="0" y1="14.5" x2="29" y2="14.5"/></g></svg>
<div style="position:absolute;left:3613.80px;top:432.94px;font-size:33.25px;line-height:1;font-weight:normal;color:#1c1f24;white-space:pre;transform:scaleX(0.9919);transform-origin:0 0;-webkit-text-stroke:1.06px #1c1f24;">Add panels</div>
<svg style="position:absolute;left:578.5px;top:1468.5px;overflow:visible;" width="24.0" height="16.0" viewBox="0 0 24.0 16.0"><polyline points="2,3 12,13 22,3" fill="none" stroke="#9da0a5" stroke-width="2.4" stroke-linecap="round" stroke-linejoin="round"/></svg>
<div style="position:absolute;left:620.60px;top:1457.12px;font-size:33.5px;line-height:1;font-weight:normal;color:#2a2e34;white-space:pre;transform:scaleX(0.9560);transform-origin:0 0;">Panel Section</div>
<svg style="position:absolute;left:839.8px;top:1452.8px;overflow:visible;" width="44.0" height="44.0" viewBox="0 0 44.0 44.0"><circle cx="22" cy="22" r="22" fill="#eeeeee"/></svg>
<div style="position:absolute;left:853.47px;top:1462.01px;font-size:27.75px;line-height:1;font-weight:normal;color:#2a2e34;white-space:pre;">2</div>
<svg style="position:absolute;left:3204px;top:1464.5px;overflow:visible;" width="36" height="16.0" viewBox="0 0 36 16.0"><circle cx="5.8" cy="8" r="3.3" fill="none" stroke="#1f2328" stroke-width="2"/><circle cx="17.6" cy="8" r="3.3" fill="none" stroke="#1f2328" stroke-width="2"/><circle cx="29.4" cy="8" r="3.3" fill="none" stroke="#1f2328" stroke-width="2"/></svg>
<svg style="position:absolute;left:3288.5px;top:1457.0px;overflow:visible;" width="30.0" height="30.0" viewBox="0 0 30.0 30.0"><g fill="none" stroke="#1f2328" stroke-width="2.3" stroke-linejoin="round" stroke-linecap="round"><path d="M1.5 12.5 L14.8 1 L16.5 10 L27 13 L18.5 19.5 L13.4 27 L10 18.5 Z"/><line x1="19" y1="19.5" x2="28.5" y2="28.5"/></g></svg>
<svg style="position:absolute;left:3379px;top:1460.0px;overflow:visible;" width="32" height="30.0" viewBox="0 0 32 30.0"><g fill="none" stroke="#1f2328" stroke-linecap="round" stroke-linejoin="round"><path d="M7.6 4.2 C9.2 1.6 11.6 1.4 12.8 4.4 L16.6 14.2 C17.6 16.8 19.8 17.6 22.6 15.2" stroke-width="2.5"/><path d="M24.4 3.6 C22.4 1.2 20.2 1.8 18.6 4 L11.6 14.6 C10.2 16.8 8.2 17.4 6.8 15.8" stroke-width="2.2"/><line x1="1" y1="24" x2="30" y2="24" stroke-width="2.3"/><polyline points="25,19.5 30,24 25,28.5" stroke-width="2.3"/></g></svg>
<svg style="position:absolute;left:3465px;top:1458.0px;overflow:visible;" width="35" height="30.0" viewBox="0 0 35 30.0"><g fill="none" stroke="#1f2328" stroke-width="2.3" stroke-linejoin="round" stroke-linecap="round"><path d="M1.5 28.5 L33 28.5 L33 8 C33 5 31 4 29 4 L22 4 C12 4 3 14 1.5 24 Z"/><line x1="2" y1="22" x2="33" y2="22"/><rect x="15.5" y="0.5" width="12" height="5" rx="2.5"/></g><circle cx="22.7" cy="16.3" r="1.6" fill="#1f2328"/><circle cx="27.6" cy="16.3" r="1.6" fill="#1f2328"/></svg>
<svg style="position:absolute;left:3557.5px;top:1458.0px;overflow:visible;" width="29.0" height="29.0" viewBox="0 0 29.0 29.0"><g stroke="#1f2328" stroke-width="2.1" stroke-linecap="butt"><line x1="14.5" y1="0" x2="14.5" y2="29"/><line x1="0" y1="14.5" x2="29" y2="14.5"/></g></svg>
<div style="position:absolute;left:3613.80px;top:1455.74px;font-size:33.25px;line-height:1;font-weight:normal;color:#1c1f24;white-space:pre;transform:scaleX(0.9919);transform-origin:0 0;-webkit-text-stroke:1.06px #1c1f24;">Add panels</div>
<div style="position:absolute;left:3520.1px;top:2274.9px;width:281.8000000000002px;height:69.59999999999991px;background:#e9e9e9;border-radius:10px;"></div>
<svg style="position:absolute;left:3547.3px;top:2295.1px;overflow:visible;" width="29.0" height="29.0" viewBox="0 0 29.0 29.0"><g stroke="#1f2328" stroke-width="2.1" stroke-linecap="butt"><line x1="14.5" y1="0" x2="14.5" y2="29"/><line x1="0" y1="14.5" x2="29" y2="14.5"/></g></svg>
<div style="position:absolute;left:3603.50px;top:2293.30px;font-size:34.0px;line-height:1;font-weight:normal;color:#1c1f24;white-space:pre;transform:scaleX(0.9798);transform-origin:0 0;-webkit-text-stroke:1.09px #1c1f24;">Add section</div>
<div style="position:absolute;left:618.1px;top:537.3px;width:1035.9px;height:809.7px;background:#ffffff;border-radius:4.5px;border:2px solid #cacacc;box-sizing:border-box;"></div>
<div style="position:absolute;left:1689.8px;top:537.3px;width:1035.6000000000001px;height:809.7px;background:#ffffff;border-radius:4.5px;border:2px solid #cacacc;box-sizing:border-box;"></div>
<div style="position:absolute;left:618.1px;top:1525.3px;width:1035.9px;height:659.5000000000002px;background:#ffffff;border-radius:4.5px;border:2px solid #cacacc;box-sizing:border-box;"></div>
<div style="position:absolute;left:1689.8px;top:1525.3px;width:1035.6000000000001px;height:659.5000000000002px;background:#ffffff;border-radius:4.5px;border:2px solid #cacacc;box-sizing:border-box;"></div>
<div style="position:absolute;left:1019.00px;top:604.45px;font-size:33.0px;line-height:1;font-weight:normal;color:#2b3038;white-space:pre;transform:scaleX(1.0884);transform-origin:0 0;-webkit-text-stroke:1.06px #2b3038;">train/train_loss</div>
<div style="position:absolute;left:1095.6px;top:663.4px;width:21.300000000000182px;height:4.399999999999977px;background:#e5719c;border-radius:1px;"></div>
<svg style="position:absolute;left:1128px;top:655px;overflow:visible;" width="27" height="25" viewBox="0 0 27 25"><circle cx="6" cy="9" r="1.8" fill="#d9386c"/><circle cx="6" cy="18.6" r="1.8" fill="#d9386c"/><line x1="16" y1="13.2" x2="22" y2="13.2" stroke="#d9386c" stroke-width="1.8"/></svg>
<div style="position:absolute;left:1587px;top:652px;width:29px;height:28px;background:#fafafa;border-radius:2px;border:1px solid #ececec;box-sizing:border-box;"></div>
<div style="position:absolute;left:1595px;top:654px;width:14px;height:23px;background:#bdbdbd;border-radius:7px;"></div>
<div style="position:absolute;left:738px;top:753.75px;width:847px;height:1.5px;background:#e9e9e9;border-radius:0px;"></div>
<div style="position:absolute;left:712px;top:753.75px;width:26px;height:1.5px;background:#e4e4e4;border-radius:0px;"></div>
<div style="position:absolute;left:653.50px;top:740.05px;font-size:29.0px;line-height:1;font-weight:normal;color:#6b7078;white-space:pre;">1.4</div>
<div style="position:absolute;left:738px;top:842.75px;width:847px;height:1.5px;background:#e9e9e9;border-radius:0px;"></div>
<div style="position:absolute;left:712px;top:842.75px;width:26px;height:1.5px;background:#e4e4e4;border-radius:0px;"></div>
<div style="position:absolute;left:653.50px;top:829.05px;font-size:29.0px;line-height:1;font-weight:normal;color:#6b7078;white-space:pre;">1.2</div>
<div style="position:absolute;left:738px;top:932.25px;width:847px;height:1.5px;background:#e9e9e9;border-radius:0px;"></div>
<div style="position:absolute;left:712px;top:932.25px;width:26px;height:1.5px;background:#e4e4e4;border-radius:0px;"></div>
<div style="position:absolute;left:677.50px;top:918.55px;font-size:29.0px;line-height:1;font-weight:normal;color:#6b7078;white-space:pre;">1</div>
<div style="position:absolute;left:738px;top:1021.25px;width:847px;height:1.5px;background:#e9e9e9;border-radius:0px;"></div>
<div style="position:absolute;left:712px;top:1021.25px;width:26px;height:1.5px;background:#e4e4e4;border-radius:0px;"></div>
<div style="position:absolute;left:653.50px;top:1007.55px;font-size:29.0px;line-height:1;font-weight:normal;color:#6b7078;white-space:pre;">0.8</div>
<div style="position:absolute;left:738px;top:1110.25px;width:847px;height:1.5px;background:#e9e9e9;border-radius:0px;"></div>
<div style="position:absolute;left:712px;top:1110.25px;width:26px;height:1.5px;background:#e4e4e4;border-radius:0px;"></div>
<div style="position:absolute;left:653.50px;top:1096.55px;font-size:29.0px;line-height:1;font-weight:normal;color:#6b7078;white-space:pre;">0.6</div>
<div style="position:absolute;left:738px;top:1199.25px;width:847px;height:1.5px;background:#e9e9e9;border-radius:0px;"></div>
<div style="position:absolute;left:712px;top:1199.25px;width:26px;height:1.5px;background:#e4e4e4;border-radius:0px;"></div>
<div style="position:absolute;left:653.50px;top:1185.55px;font-size:29.0px;line-height:1;font-weight:normal;color:#6b7078;white-space:pre;">0.4</div>
<div style="position:absolute;left:723.2px;top:702.5px;width:3.599999999999909px;height:557.0px;background:#e2e3e5;border-radius:0px;"></div>
<div style="position:absolute;left:725px;top:1256.4px;width:861px;height:4.0px;background:#e2e3e5;border-radius:0px;"></div>
<div style="position:absolute;left:723.6px;top:1244.8px;width:2.7999999999999545px;height:27.100000000000136px;background:#e2e3e5;border-radius:0px;"></div>
<div style="position:absolute;left:717.00px;top:1286.35px;font-size:29.0px;line-height:1;font-weight:normal;color:#6b7078;white-space:pre;">0</div>
<div style="position:absolute;left:896.1px;top:1244.8px;width:2.7999999999999545px;height:27.100000000000136px;background:#e2e3e5;border-radius:0px;"></div>
<div style="position:absolute;left:873.50px;top:1286.35px;font-size:29.0px;line-height:1;font-weight:normal;color:#6b7078;white-space:pre;">200</div>
<div style="position:absolute;left:1067.6px;top:1244.8px;width:2.800000000000182px;height:27.100000000000136px;background:#e2e3e5;border-radius:0px;"></div>
<div style="position:absolute;left:1045.00px;top:1286.35px;font-size:29.0px;line-height:1;font-weight:normal;color:#6b7078;white-space:pre;">400</div>
<div style="position:absolute;left:1240.1px;top:1244.8px;width:2.800000000000182px;height:27.100000000000136px;background:#e2e3e5;border-radius:0px;"></div>
<div style="position:absolute;left:1217.50px;top:1286.35px;font-size:29.0px;line-height:1;font-weight:normal;color:#6b7078;white-space:pre;">600</div>
<div style="position:absolute;left:1412.1px;top:1244.8px;width:2.800000000000182px;height:27.100000000000136px;background:#e2e3e5;border-radius:0px;"></div>
<div style="position:absolute;left:1389.50px;top:1286.35px;font-size:29.0px;line-height:1;font-weight:normal;color:#6b7078;white-space:pre;">800</div>
<div style="position:absolute;left:1583.6px;top:1244.8px;width:2.800000000000182px;height:27.100000000000136px;background:#e2e3e5;border-radius:0px;"></div>
<div style="position:absolute;left:1569.64px;top:1287.41px;font-size:27.75px;line-height:1;font-weight:normal;color:#6b7078;white-space:pre;">1k</div>
<div style="position:absolute;left:1511.96px;top:1220.78px;font-size:28.5px;line-height:1;font-weight:normal;color:#5f646b;white-space:pre;">Step</div>
<svg style="position:absolute;left:0px;top:0px;overflow:visible;pointer-events:none;" width="3866" height="2574" viewBox="0 0 3866 2574"><defs><clipPath id="c1"><rect x="700" y="702" width="900" height="600"/></clipPath></defs><path d="M760.0,682.94 L763.0,688.10 L766.0,693.34 L769.0,698.67 L772.0,704.10 L775.0,709.63 L778.0,715.28 L781.0,721.05 L784.0,726.94 L787.0,732.96 L790.0,739.11 L793.0,745.38 L796.0,751.78 L799.0,758.30 L802.0,764.94 L805.0,771.69 L808.0,778.54 L811.0,785.50 L814.0,792.54 L817.0,799.66 L820.0,806.85 L823.0,814.09 L826.0,821.38 L829.0,828.69 L832.0,836.02 L835.0,843.34 L838.0,850.64 L841.0,857.91 L844.0,865.11 L847.0,872.24 L850.0,879.28 L853.0,886.23 L856.0,893.07 L859.0,899.78 L862.0,906.38 L865.0,912.84 L868.0,919.17 L871.0,925.37 L874.0,931.43 L877.0,937.35 L880.0,943.14 L883.0,948.81 L886.0,954.34 L889.0,959.76 L892.0,965.05 L895.0,970.22 L898.0,975.28 L901.0,980.23 L904.0,985.06 L907.0,989.79 L910.0,994.41 L913.0,998.92 L916.0,1003.34 L919.0,1007.66 L922.0,1011.88 L925.0,1016.01 L928.0,1020.04 L931.0,1023.99 L934.0,1027.85 L937.0,1031.62 L940.0,1035.31 L943.0,1038.92 L946.0,1042.45 L949.0,1045.91 L952.0,1049.28 L955.0,1052.59 L958.0,1055.82 L961.0,1058.99 L964.0,1062.09 L967.0,1065.12 L970.0,1068.09 L973.0,1070.99 L976.0,1073.84 L979.0,1076.62 L982.0,1079.35 L985.0,1082.02 L988.0,1084.64 L991.0,1087.20 L994.0,1089.72 L997.0,1092.18 L1000.0,1094.60 L1003.0,1096.97 L1006.0,1099.29 L1009.0,1101.57 L1012.0,1103.80 L1015.0,1105.99 L1018.0,1108.15 L1021.0,1110.26 L1024.0,1112.33 L1027.0,1114.37 L1030.0,1116.36 L1033.0,1118.33 L1036.0,1120.26 L1039.0,1122.15 L1042.0,1124.01 L1045.0,1125.84 L1048.0,1127.64 L1051.0,1129.41 L1054.0,1131.15 L1057.0,1132.86 L1060.0,1134.54 L1063.0,1136.19 L1066.0,1137.82 L1069.0,1139.42 L1072.0,1141.00 L1075.0,1142.55 L1078.0,1144.07 L1081.0,1145.57 L1084.0,1147.05 L1087.0,1148.50 L1090.0,1149.93 L1093.0,1151.34 L1096.0,1152.72 L1099.0,1154.09 L1102.0,1155.43 L1105.0,1156.75 L1108.0,1158.05 L1111.0,1159.33 L1114.0,1160.60 L1117.0,1161.84 L1120.0,1163.06 L1123.0,1164.27 L1126.0,1165.46 L1129.0,1166.63 L1132.0,1167.79 L1135.0,1168.92 L1138.0,1170.05 L1141.0,1171.15 L1144.0,1172.24 L1147.0,1173.32 L1150.0,1174.38 L1153.0,1175.43 L1156.0,1176.46 L1159.0,1177.48 L1162.0,1178.49 L1165.0,1179.48 L1168.0,1180.46 L1171.0,1181.43 L1174.0,1182.39 L1177.0,1183.34 L1180.0,1184.27 L1183.0,1185.19 L1186.0,1186.11 L1189.0,1187.01 L1192.0,1187.90 L1195.0,1188.78 L1198.0,1189.66 L1201.0,1190.52 L1204.0,1191.37 L1207.0,1192.22 L1210.0,1193.06 L1213.0,1193.89 L1216.0,1194.71 L1219.0,1195.52 L1222.0,1196.33 L1225.0,1197.13 L1228.0,1197.92 L1231.0,1198.70 L1234.0,1199.48 L1237.0,1200.25 L1240.0,1201.02 L1243.0,1201.78 L1246.0,1202.53 L1249.0,1203.28 L1252.0,1204.02 L1255.0,1204.76 L1258.0,1205.49 L1261.0,1206.22 L1264.0,1206.94 L1267.0,1207.66 L1270.0,1208.38 L1273.0,1209.09 L1276.0,1209.79 L1279.0,1210.49 L1282.0,1211.19 L1285.0,1211.88 L1288.0,1212.57 L1291.0,1213.26 L1294.0,1213.94 L1297.0,1214.62 L1300.0,1215.29 L1303.0,1215.97 L1306.0,1216.64 L1309.0,1217.30 L1312.0,1217.97 L1315.0,1218.63 L1318.0,1219.28 L1321.0,1219.94 L1324.0,1220.59 L1327.0,1221.24 L1330.0,1221.89 L1333.0,1222.53 L1336.0,1223.17 L1339.0,1223.81 L1342.0,1224.44 L1345.0,1225.08 L1348.0,1225.71 L1351.0,1226.34 L1354.0,1226.96 L1357.0,1227.59 L1360.0,1228.21 L1363.0,1228.82 L1366.0,1229.44 L1369.0,1230.05 L1372.0,1230.66 L1375.0,1231.27 L1378.0,1231.87 L1381.0,1232.47 L1384.0,1233.07 L1387.0,1233.67 L1390.0,1234.26 L1393.0,1234.85 L1396.0,1235.44 L1399.0,1236.02 L1402.0,1236.60 L1405.0,1237.17 L1408.0,1237.74 L1411.0,1238.31 L1414.0,1238.88 L1417.0,1239.44 L1420.0,1239.99 L1423.0,1240.55 L1426.0,1241.09 L1429.0,1241.64 L1432.0,1242.18 L1435.0,1242.71 L1438.0,1243.24 L1441.0,1243.76 L1444.0,1244.28 L1447.0,1244.80 L1450.0,1245.30 L1453.0,1245.81 L1456.0,1246.30 L1459.0,1246.79 L1462.0,1247.27 L1465.0,1247.75 L1468.0,1248.22 L1471.0,1248.68 L1474.0,1249.14 L1477.0,1249.59 L1480.0,1250.03 L1483.0,1250.46 L1486.0,1250.88 L1489.0,1251.30 L1492.0,1251.70 L1495.0,1252.10 L1498.0,1252.49 L1501.0,1252.87 L1504.0,1253.24 L1507.0,1253.60 L1510.0,1253.94 L1513.0,1254.28 L1516.0,1254.61 L1519.0,1254.92 L1522.0,1255.23 L1525.0,1255.52 L1528.0,1255.80 L1531.0,1256.07 L1534.0,1256.32 L1537.0,1256.56 L1540.0,1256.79 L1543.0,1257.00 L1546.0,1257.20 L1549.0,1257.39 L1552.0,1257.56 L1555.0,1257.71 L1558.0,1257.85 L1561.0,1257.97 L1564.0,1258.08 L1567.0,1258.17 L1570.0,1258.24 L1573.0,1258.29 L1576.0,1258.33 L1579.0,1258.35 L1582.0,1258.35 L1585.0,1258.32" fill="none" stroke="#e36d98" stroke-width="6.2" stroke-linecap="round" stroke-linejoin="round" clip-path="url(#c1)"/><circle cx="1585" cy="1263.5" r="5" fill="#e5719c"/></svg>
<div style="position:absolute;left:2081.50px;top:604.45px;font-size:33.0px;line-height:1;font-weight:normal;color:#2b3038;white-space:pre;transform:scaleX(1.0723);transform-origin:0 0;-webkit-text-stroke:1.06px #2b3038;">train/epoch_ndx</div>
<div style="position:absolute;left:1955px;top:664px;width:21.5px;height:3.5px;background:#c25ac8;border-radius:1px;"></div>
<div style="position:absolute;left:1991.00px;top:652.93px;font-size:25.5px;line-height:1;font-weight:normal;color:#b24dbc;white-space:pre;transform:scaleX(0.9953);transform-origin:0 0;">glowing-shadow-8</div>
<div style="position:absolute;left:2220px;top:664px;width:21px;height:3.5px;background:#3b8d52;border-radius:1px;"></div>
<div style="position:absolute;left:2255.00px;top:652.93px;font-size:25.5px;line-height:1;font-weight:normal;color:#327d4a;white-space:pre;transform:scaleX(0.9867);transform-origin:0 0;">golden-sunset-3</div>
<div style="position:absolute;left:2659px;top:652px;width:29px;height:28px;background:#fafafa;border-radius:2px;border:1px solid #ececec;box-sizing:border-box;"></div>
<div style="position:absolute;left:2667px;top:654px;width:14px;height:23px;background:#bdbdbd;border-radius:7px;"></div>
<div style="position:absolute;left:1816.5px;top:793.25px;width:840.0px;height:1.5px;background:#e9e9e9;border-radius:0px;"></div>
<div style="position:absolute;left:1790.5px;top:793.25px;width:26.0px;height:1.5px;background:#e4e4e4;border-radius:0px;"></div>
<div style="position:absolute;left:1723.00px;top:779.55px;font-size:29.0px;line-height:1;font-weight:normal;color:#6b7078;white-space:pre;">800</div>
<div style="position:absolute;left:1816.5px;top:917.25px;width:840.0px;height:1.5px;background:#e9e9e9;border-radius:0px;"></div>
<div style="position:absolute;left:1790.5px;top:917.25px;width:26.0px;height:1.5px;background:#e4e4e4;border-radius:0px;"></div>
<div style="position:absolute;left:1723.00px;top:903.55px;font-size:29.0px;line-height:1;font-weight:normal;color:#6b7078;white-space:pre;">600</div>
<div style="position:absolute;left:1816.5px;top:1040.75px;width:840.0px;height:1.5px;background:#e9e9e9;border-radius:0px;"></div>
<div style="position:absolute;left:1790.5px;top:1040.75px;width:26.0px;height:1.5px;background:#e4e4e4;border-radius:0px;"></div>
<div style="position:absolute;left:1723.00px;top:1027.05px;font-size:29.0px;line-height:1;font-weight:normal;color:#6b7078;white-space:pre;">400</div>
<div style="position:absolute;left:1816.5px;top:1164.25px;width:840.0px;height:1.5px;background:#e9e9e9;border-radius:0px;"></div>
<div style="position:absolute;left:1790.5px;top:1164.25px;width:26.0px;height:1.5px;background:#e4e4e4;border-radius:0px;"></div>
<div style="position:absolute;left:1723.00px;top:1150.55px;font-size:29.0px;line-height:1;font-weight:normal;color:#6b7078;white-space:pre;">200</div>
<div style="position:absolute;left:1801.7px;top:702.5px;width:3.599999999999909px;height:557.0px;background:#e2e3e5;border-radius:0px;"></div>
<div style="position:absolute;left:1803.5px;top:1256.4px;width:854.0px;height:4.0px;background:#e2e3e5;border-radius:0px;"></div>
<div style="position:absolute;left:1802.1px;top:1244.8px;width:2.800000000000182px;height:27.100000000000136px;background:#e2e3e5;border-radius:0px;"></div>
<div style="position:absolute;left:1795.50px;top:1286.35px;font-size:29.0px;line-height:1;font-weight:normal;color:#6b7078;white-space:pre;">0</div>
<div style="position:absolute;left:1972.6px;top:1244.8px;width:2.800000000000182px;height:27.100000000000136px;background:#e2e3e5;border-radius:0px;"></div>
<div style="position:absolute;left:1950.00px;top:1286.35px;font-size:29.0px;line-height:1;font-weight:normal;color:#6b7078;white-space:pre;">200</div>
<div style="position:absolute;left:2143.6px;top:1244.8px;width:2.800000000000182px;height:27.100000000000136px;background:#e2e3e5;border-radius:0px;"></div>
<div style="position:absolute;left:2121.00px;top:1286.35px;font-size:29.0px;line-height:1;font-weight:normal;color:#6b7078;white-space:pre;">400</div>
<div style="position:absolute;left:2314.1px;top:1244.8px;width:2.800000000000182px;height:27.100000000000136px;background:#e2e3e5;border-radius:0px;"></div>
<div style="position:absolute;left:2291.50px;top:1286.35px;font-size:29.0px;line-height:1;font-weight:normal;color:#6b7078;white-space:pre;">600</div>
<div style="position:absolute;left:2484.6px;top:1244.8px;width:2.800000000000182px;height:27.100000000000136px;background:#e2e3e5;border-radius:0px;"></div>
<div style="position:absolute;left:2462.00px;top:1286.35px;font-size:29.0px;line-height:1;font-weight:normal;color:#6b7078;white-space:pre;">800</div>
<div style="position:absolute;left:2655.1px;top:1244.8px;width:2.800000000000182px;height:27.100000000000136px;background:#e2e3e5;border-radius:0px;"></div>
<div style="position:absolute;left:2641.14px;top:1287.41px;font-size:27.75px;line-height:1;font-weight:normal;color:#6b7078;white-space:pre;">1k</div>
<div style="position:absolute;left:2583.46px;top:1220.78px;font-size:28.5px;line-height:1;font-weight:normal;color:#5f646b;white-space:pre;">Step</div>
<div style="position:absolute;left:1803.5px;top:1287px;width:854.5px;height:3.5px;background:#e2e3e5;border-radius:0px;"></div>
<svg style="position:absolute;left:0px;top:0px;overflow:visible;pointer-events:none;" width="3866" height="2574" viewBox="0 0 3866 2574"><defs><clipPath id="c2"><rect x="1805" y="701.7" width="860" height="558.3"/></clipPath></defs><line x1="1843" y1="1261.7" x2="2625" y2="694.5" stroke="#3b8d52" stroke-width="3.4" stroke-linecap="butt" clip-path="url(#c2)"/></svg>
<div style="position:absolute;left:665.00px;top:1595.01px;font-size:29.75px;line-height:1;font-weight:normal;color:#2b3038;white-space:pre;transform:scaleX(1.0225);transform-origin:0 0;-webkit-text-stroke:0.95px #2b3038;">Parameter importance with respect to</div>
<div style="position:absolute;left:665px;top:1630px;width:438px;height:48.5px;background:#ffffff;border-radius:8px;border:2px solid #d2d2d2;box-sizing:border-box;"></div>
<svg style="position:absolute;left:695px;top:1635px;overflow:visible;" width="36" height="35" viewBox="0 0 36 35"><line x1="5.9" y1="20.8" x2="5.9" y2="32.8" stroke="#8a8e94" stroke-width="2.2"/><line x1="13.9" y1="12.9" x2="13.9" y2="32.8" stroke="#8a8e94" stroke-width="2.2"/><line x1="22.3" y1="12.9" x2="22.3" y2="32.8" stroke="#8a8e94" stroke-width="2.2"/><line x1="30.8" y1="2.9" x2="30.8" y2="32.8" stroke="#8a8e94" stroke-width="2.2"/></svg>
<div style="position:absolute;left:751.08px;top:1639.45px;font-size:33.0px;line-height:1;font-weight:normal;color:#2b3038;white-space:pre;transform:scaleX(1.0805);transform-origin:0 0;">_wandb.runtime</div>
<svg style="position:absolute;left:1055px;top:1645px;overflow:visible;" width="24" height="18" viewBox="0 0 24 18"><polyline points="3,5 11.5,13 20,5" fill="none" stroke="#2b3038" stroke-width="2.4" stroke-linecap="round" stroke-linejoin="round"/></svg>
<div style="position:absolute;left:680.00px;top:1738.28px;font-size:28.5px;line-height:1;font-weight:normal;color:#9ea2a8;white-space:pre;transform:scaleX(0.8831);transform-origin:0 0;">Search</div>
<div style="position:absolute;left:1007.5px;top:1715px;width:335.0px;height:71.5px;background:#f3f3f3;border-radius:9px;border:2px solid #d0d0d0;box-sizing:border-box;"></div>
<div style="position:absolute;left:1269px;top:1716px;width:2px;height:69.5px;background:#d0d0d0;border-radius:0px;"></div>
<svg style="position:absolute;left:1030.75px;top:1725px;overflow:visible;" width="52.0" height="52" viewBox="0 0 52.0 52"><g transform="translate(-1030.75,-1725)"><path d="M1053.01,1735.42 L1053.14,1729.30 L1060.36,1729.30 L1060.49,1735.42 L1065.12,1737.34 L1069.54,1733.10 L1074.65,1738.21 L1070.41,1742.63 L1072.33,1747.26 L1078.45,1747.39 L1078.45,1754.61 L1072.33,1754.74 L1070.41,1759.37 L1074.65,1763.79 L1069.54,1768.90 L1065.12,1764.66 L1060.49,1766.58 L1060.36,1772.70 L1053.14,1772.70 L1053.01,1766.58 L1048.38,1764.66 L1043.96,1768.90 L1038.85,1763.79 L1043.09,1759.37 L1041.17,1754.74 L1035.05,1754.61 L1035.05,1747.39 L1041.17,1747.26 L1043.09,1742.63 L1038.85,1738.21 L1043.96,1733.10 L1048.38,1737.34 Z" fill="none" stroke="#3a3f46" stroke-width="2.4" stroke-linejoin="round"/><circle cx="1056.75" cy="1751" r="7.13" fill="none" stroke="#3a3f46" stroke-width="2.4"/></g></svg>
<div style="position:absolute;left:1097.50px;top:1737.42px;font-size:29.5px;line-height:1;font-weight:normal;color:#2f343a;white-space:pre;transform:scaleX(0.9513);transform-origin:0 0;">Parameters</div>
<svg style="position:absolute;left:1282px;top:1726px;overflow:visible;" width="48" height="46" viewBox="0 0 48 46"><g fill="none" stroke="#3a3f46" stroke-width="2.2" stroke-linecap="round" stroke-linejoin="round"><line x1="6" y1="42" x2="28" y2="20"/><path d="M33 4 L35 11 L42 11 L37 16 L39 23 L33 19 L27 22 L29 15 L24 11 L31 11 Z"/></g><g fill="#3a3f46"><path d="M12 10 l1.5 4 l4 1.5 l-4 1.5 l-1.5 4 l-1.5 -4 l-4 -1.5 l4 -1.5 z"/><path d="M40 30 l1.2 3 l3 1.2 l-3 1.2 l-1.2 3 l-1.2 -3 l-3 -1.2 l3 -1.2 z"/><circle cx="22" cy="5" r="1.5"/></g></svg>
<div style="position:absolute;left:1386.00px;top:1737.85px;font-size:29.0px;line-height:1;font-weight:normal;color:#2f343a;white-space:pre;transform:scaleX(1.0476);transform-origin:0 0;">1-9</div>
<svg style="position:absolute;left:1431px;top:1749px;overflow:visible;" width="13" height="9" viewBox="0 0 13 9"><polygon points="0,1 12,1 6,8" fill="#2f343a"/></svg>
<div style="position:absolute;left:1470.00px;top:1738.91px;font-size:27.75px;line-height:1;font-weight:normal;color:#2f343a;white-space:pre;transform:scaleX(0.9124);transform-origin:0 0;">of 9</div>
<svg style="position:absolute;left:1590px;top:1738px;overflow:visible;" width="20" height="27" viewBox="0 0 20 27"><polyline points="16,3 5,13.5 16,24" fill="none" stroke="#b0b3b8" stroke-width="2.4" stroke-linecap="round" stroke-linejoin="round"/></svg>
<div style="position:absolute;left:635px;top:1806.5px;width:1002.5px;height:1.5px;background:#e8e8e8;border-radius:0px;"></div>
<div style="position:absolute;left:635px;top:1808px;width:1002.5px;height:27px;background:#fafafa;border-radius:0px;"></div>
<div style="position:absolute;left:641.5px;top:1814px;width:900.0px;height:16px;background:#b6b6b6;border-radius:8px;"></div>
<div style="position:absolute;left:635px;top:1834.5px;width:1002.5px;height:1.5px;background:#e8e8e8;border-radius:0px;"></div>
<div style="position:absolute;left:635px;top:1836px;width:1002.5px;height:72.5px;background:#f5f5f5;border-radius:0px;"></div>
<div style="position:absolute;left:669.00px;top:1855.58px;font-size:30.5px;line-height:1;font-weight:normal;color:#3f444a;white-space:pre;transform:scaleX(0.8903);transform-origin:0 0;">Config parameter</div>
<div style="position:absolute;left:1003.00px;top:1855.15px;font-size:31.0px;line-height:1;font-weight:bold;color:#2b3038;white-space:pre;transform:scaleX(0.8563);transform-origin:0 0;">Importance</div>
<svg style="position:absolute;left:1159px;top:1858px;overflow:visible;" width="28" height="28" viewBox="0 0 28 28"><circle cx="14" cy="14" r="11.5" fill="none" stroke="#3a3f46" stroke-width="2"/><text x="14" y="21" text-anchor="middle" font-family="Liberation Serif" font-style="italic" font-size="18" fill="#3a3f46">i</text></svg>
<svg style="position:absolute;left:1200px;top:1857px;overflow:visible;" width="26" height="31" viewBox="0 0 26 31"><g fill="none" stroke="#2b3038" stroke-width="3" stroke-linecap="round" stroke-linejoin="round"><line x1="13" y1="3" x2="13" y2="27"/><polyline points="4,18 13,27 22,18"/></g></svg>
<div style="position:absolute;left:1336.50px;top:1855.58px;font-size:30.5px;line-height:1;font-weight:normal;color:#3f444a;white-space:pre;transform:scaleX(0.9033);transform-origin:0 0;">Correlation</div>
<div style="position:absolute;left:635px;top:1908.5px;width:972.5px;height:226.5px;background:#ffffff;border-radius:0px;"></div>
<div style="position:absolute;left:669.00px;top:1934.45px;font-size:33.0px;line-height:1;font-weight:normal;color:#2b3038;white-space:pre;transform:scaleX(1.0244);transform-origin:0 0;">Runtime</div>
<div style="position:absolute;left:991.5px;top:1924px;width:280.0px;height:31.5px;background:#edf1f9;border-radius:8px;"></div>
<div style="position:absolute;left:991.5px;top:1924px;width:211.5px;height:31.5px;background:#2866bf;border-radius:0px;border-radius:8px 0 0 8px;"></div>
<div style="position:absolute;left:1316px;top:1924px;width:279.5px;height:31.5px;background:#eff2f5;border-radius:8px;"></div>
<div style="position:absolute;left:1316px;top:1924px;width:197px;height:31.5px;background:#08a994;border-radius:0px;border-radius:8px 0 0 8px;"></div>
<div style="position:absolute;left:635px;top:1993px;width:972.5px;height:1.5px;background:#eeeeee;border-radius:0px;"></div>
<div style="position:absolute;left:669.00px;top:2020.51px;font-size:31.75px;line-height:1;font-weight:normal;color:#2b3038;white-space:pre;transform:scaleX(1.0933);transform-origin:0 0;">model_type.val...</div>
<div style="position:absolute;left:991.5px;top:2010px;width:280.0px;height:31.5px;background:#edf1f9;border-radius:8px;"></div>
<div style="position:absolute;left:991.5px;top:2010px;width:36.5px;height:31.5px;background:#2866bf;border-radius:0px;border-radius:8px 0 0 8px;"></div>
<div style="position:absolute;left:1316px;top:2010px;width:279.5px;height:31.5px;background:#eff2f5;border-radius:8px;"></div>
<div style="position:absolute;left:1316px;top:2010px;width:196px;height:31.5px;background:#08a994;border-radius:0px;border-radius:8px 0 0 8px;"></div>
<div style="position:absolute;left:635px;top:2079px;width:972.5px;height:1.5px;background:#eeeeee;border-radius:0px;"></div>
<div style="position:absolute;left:669.00px;top:2105.51px;font-size:31.75px;line-height:1;font-weight:normal;color:#2b3038;white-space:pre;transform:scaleX(1.0933);transform-origin:0 0;">model_type.val...</div>
<div style="position:absolute;left:991.5px;top:2096px;width:280.0px;height:31.5px;background:#edf1f9;border-radius:8px;"></div>
<div style="position:absolute;left:991.5px;top:2096px;width:31.5px;height:31.5px;background:#2866bf;border-radius:0px;border-radius:8px 0 0 8px;"></div>
<div style="position:absolute;left:1316px;top:2096px;width:279.5px;height:31.5px;background:#f7f3ef;border-radius:8px;"></div>
<div style="position:absolute;left:1316px;top:2096px;width:196px;height:31.5px;background:#dc5c70;border-radius:0px;border-radius:8px 0 0 8px;"></div>
<div style="position:absolute;left:620.5px;top:2135px;width:1031.0px;height:48px;background:#ffffff;border-radius:0px;"></div>
<div style="position:absolute;left:1607px;top:1908.5px;width:30.5px;height:226.5px;background:#f9f9f9;border-radius:0px;"></div>
<div style="position:absolute;left:1607px;top:1908.5px;width:1.5px;height:226.5px;background:#e8e8e8;border-radius:0px;"></div>
<div style="position:absolute;left:1615px;top:1915px;width:16px;height:53.5px;background:#b9b9b9;border-radius:8px;"></div>
<div style="position:absolute;left:2023.50px;top:1589.92px;font-size:29.5px;line-height:1;font-weight:normal;color:#2b3038;white-space:pre;transform:scaleX(0.9523);transform-origin:0 0;-webkit-text-stroke:0.94px #2b3038;">Process CPU Threads In Use</div>
<div style="position:absolute;left:1797.80px;top:1664.91px;font-size:25.75px;line-height:1;font-weight:normal;color:#5d6269;white-space:pre;transform:scaleX(1.0124);transform-origin:0 0;">colorful-yogurt-9</div>
<div style="position:absolute;left:1797px;top:1695px;width:820.5px;height:10px;background:#e8ae31;border-radius:0px;"></div>
<div style="position:absolute;left:1797.80px;top:1721.91px;font-size:25.75px;line-height:1;font-weight:normal;color:#5d6269;white-space:pre;transform:scaleX(0.9905);transform-origin:0 0;">glowing-shadow-8</div>
<div style="position:absolute;left:1797px;top:1752px;width:820.5px;height:10px;background:#bf5bc4;border-radius:0px;"></div>
<div style="position:absolute;left:1798.77px;top:1778.91px;font-size:25.75px;line-height:1;font-weight:normal;color:#5d6269;white-space:pre;transform:scaleX(0.9825);transform-origin:0 0;">wild-cosmos-7</div>
<div style="position:absolute;left:1797px;top:1809px;width:526px;height:10px;background:#7cc5b5;border-radius:0px;"></div>
<div style="position:absolute;left:1797.80px;top:1835.91px;font-size:25.75px;line-height:1;font-weight:normal;color:#5d6269;white-space:pre;transform:scaleX(0.9968);transform-origin:0 0;">fallen-dawn-6</div>
<div style="position:absolute;left:1797px;top:1866px;width:493px;height:10px;background:#e0672f;border-radius:0px;"></div>
<div style="position:absolute;left:1797.80px;top:1892.91px;font-size:25.75px;line-height:1;font-weight:normal;color:#5d6269;white-space:pre;transform:scaleX(1.0277);transform-origin:0 0;">trim-moon-4</div>
<div style="position:absolute;left:1797px;top:1923px;width:820.5px;height:10px;background:#7049a9;border-radius:0px;"></div>
<div style="position:absolute;left:1797.80px;top:1949.91px;font-size:25.75px;line-height:1;font-weight:normal;color:#5d6269;white-space:pre;transform:scaleX(0.9771);transform-origin:0 0;">golden-sunset-3</div>
<div style="position:absolute;left:1797px;top:1980px;width:820.5px;height:10px;background:#3d8f53;border-radius:0px;"></div>
<div style="position:absolute;left:1797.80px;top:2006.91px;font-size:25.75px;line-height:1;font-weight:normal;color:#5d6269;white-space:pre;transform:scaleX(1.0268);transform-origin:0 0;">trim-rain-2</div>
<div style="position:absolute;left:1797px;top:2037px;width:526px;height:10px;background:#d44141;border-radius:0px;"></div>
<div style="position:absolute;left:1797px;top:2100.5px;width:822px;height:2.0px;background:#a8a8a8;border-radius:0px;"></div>
<div style="position:absolute;left:1796.0px;top:2101.5px;width:2.0px;height:17.5px;background:#a8a8a8;border-radius:0px;"></div>
<div style="position:absolute;left:1784.50px;top:2128.10px;font-size:24.0px;line-height:1;font-weight:normal;color:#5d6269;white-space:pre;">0</div>
<div style="position:absolute;left:1861.7px;top:2101.5px;width:2.0px;height:17.5px;background:#a8a8a8;border-radius:0px;"></div>
<div style="position:absolute;left:1850.20px;top:2128.10px;font-size:24.0px;line-height:1;font-weight:normal;color:#5d6269;white-space:pre;">2</div>
<div style="position:absolute;left:1927.4px;top:2101.5px;width:2.0px;height:17.5px;background:#a8a8a8;border-radius:0px;"></div>
<div style="position:absolute;left:1915.90px;top:2128.10px;font-size:24.0px;line-height:1;font-weight:normal;color:#5d6269;white-space:pre;">4</div>
<div style="position:absolute;left:1993.1px;top:2101.5px;width:2.0px;height:17.5px;background:#a8a8a8;border-radius:0px;"></div>
<div style="position:absolute;left:1981.60px;top:2128.10px;font-size:24.0px;line-height:1;font-weight:normal;color:#5d6269;white-space:pre;">6</div>
<div style="position:absolute;left:2058.8px;top:2101.5px;width:2.0px;height:17.5px;background:#a8a8a8;border-radius:0px;"></div>
<div style="position:absolute;left:2047.30px;top:2128.10px;font-size:24.0px;line-height:1;font-weight:normal;color:#5d6269;white-space:pre;">8</div>
<div style="position:absolute;left:2124.5px;top:2101.5px;width:2.0px;height:17.5px;background:#a8a8a8;border-radius:0px;"></div>
<div style="position:absolute;left:2106.00px;top:2128.10px;font-size:24.0px;line-height:1;font-weight:normal;color:#5d6269;white-space:pre;">10</div>
<div style="position:absolute;left:2190.2px;top:2101.5px;width:2.0px;height:17.5px;background:#a8a8a8;border-radius:0px;"></div>
<div style="position:absolute;left:2171.70px;top:2128.10px;font-size:24.0px;line-height:1;font-weight:normal;color:#5d6269;white-space:pre;">12</div>
<div style="position:absolute;left:2255.9px;top:2101.5px;width:2.0px;height:17.5px;background:#a8a8a8;border-radius:0px;"></div>
<div style="position:absolute;left:2237.40px;top:2128.10px;font-size:24.0px;line-height:1;font-weight:normal;color:#5d6269;white-space:pre;">14</div>
<div style="position:absolute;left:2321.6px;top:2101.5px;width:2.0px;height:17.5px;background:#a8a8a8;border-radius:0px;"></div>
<div style="position:absolute;left:2303.10px;top:2128.10px;font-size:24.0px;line-height:1;font-weight:normal;color:#5d6269;white-space:pre;">16</div>
<div style="position:absolute;left:2387.3px;top:2101.5px;width:2.0px;height:17.5px;background:#a8a8a8;border-radius:0px;"></div>
<div style="position:absolute;left:2368.80px;top:2128.10px;font-size:24.0px;line-height:1;font-weight:normal;color:#5d6269;white-space:pre;">18</div>
<div style="position:absolute;left:2453.0px;top:2101.5px;width:2.0px;height:17.5px;background:#a8a8a8;border-radius:0px;"></div>
<div style="position:absolute;left:2434.50px;top:2128.10px;font-size:24.0px;line-height:1;font-weight:normal;color:#5d6269;white-space:pre;">20</div>
<div style="position:absolute;left:2518.7px;top:2101.5px;width:2.0px;height:17.5px;background:#a8a8a8;border-radius:0px;"></div>
<div style="position:absolute;left:2500.20px;top:2128.10px;font-size:24.0px;line-height:1;font-weight:normal;color:#5d6269;white-space:pre;">22</div>
<div style="position:absolute;left:2584.4px;top:2101.5px;width:2.0px;height:17.5px;background:#a8a8a8;border-radius:0px;"></div>
<div style="position:absolute;left:2565.90px;top:2128.10px;font-size:24.0px;line-height:1;font-weight:normal;color:#5d6269;white-space:pre;">24</div>
<div style="position:absolute;left:164px;top:2475px;width:340px;height:92px;background:#ffffff;border-radius:14px;box-shadow:0 1px 4px rgba(0,0,0,0.06);"></div>
<div style="position:absolute;left:207.00px;top:2503.95px;font-size:33.0px;line-height:1;font-weight:normal;color:#2f343a;white-space:pre;transform:scaleX(0.8958);transform-origin:0 0;">1-9</div>
<svg style="position:absolute;left:260px;top:2520px;overflow:visible;" width="17" height="10" viewBox="0 0 17 10"><polygon points="0,1 15,1 7.5,9" fill="#1f2328"/></svg>
<div style="position:absolute;left:305.00px;top:2505.01px;font-size:31.75px;line-height:1;font-weight:normal;color:#2f343a;white-space:pre;transform:scaleX(0.9889);transform-origin:0 0;">of 9</div>
<svg style="position:absolute;left:394px;top:2506px;overflow:visible;" width="22" height="32" viewBox="0 0 22 32"><polyline points="17,4 5,16 17,28" fill="none" stroke="#3a3f46" stroke-width="2.4" stroke-linecap="round" stroke-linejoin="round"/></svg>
<svg style="position:absolute;left:449px;top:2506px;overflow:visible;" width="22" height="32" viewBox="0 0 22 32"><polyline points="5,4 17,16 5,28" fill="none" stroke="#3a3f46" stroke-width="2.4" stroke-linecap="round" stroke-linejoin="round"/></svg>
<div style="position:absolute;left:40px;top:2492px;width:224px;height:42px;background:rgba(88,89,92,0.9);border-radius:21px;"></div>
<svg style="position:absolute;left:57px;top:2498px;overflow:visible;" width="32" height="30" viewBox="0 0 32 30"><g fill="none" stroke="#ffffff" stroke-width="1.6" stroke-linejoin="round"><path d="M2 4 L10 10 L22 10 L30 4 L30 17 L16 28 L2 17 Z"/><path d="M2 17 L10 10 L16 20 L22 10 L30 17"/><path d="M10 10 L16 15 L22 10"/><path d="M16 20 L16 28"/></g></svg>
<div style="position:absolute;left:98.00px;top:2506.18px;font-size:14.5px;line-height:1;font-weight:bold;color:#ffffff;white-space:pre;transform:scaleX(1.1190);transform-origin:0 0;">MADE WITH GIFOX</div></div></body></html>
